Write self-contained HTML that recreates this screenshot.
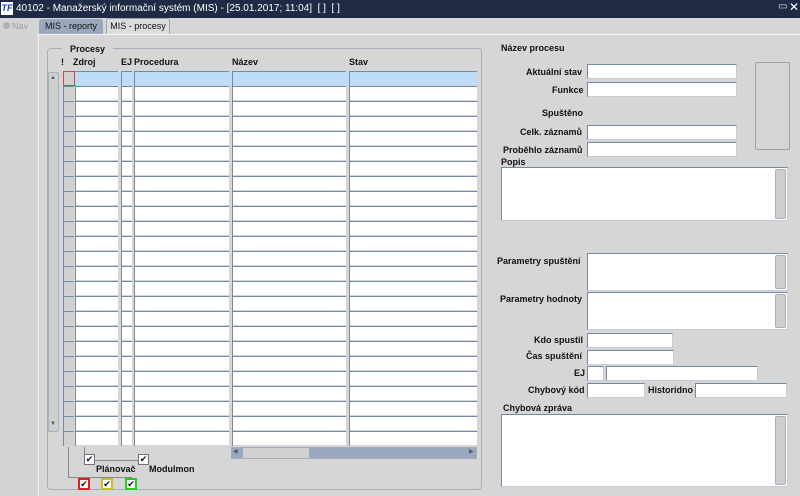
<!DOCTYPE html>
<html><head><meta charset="utf-8"><style>
*{margin:0;padding:0;box-sizing:border-box}
body{width:800px;height:496px;overflow:hidden;background:#d6d6d6;font-family:"Liberation Sans",sans-serif;font-size:9px;color:#111;position:relative}
.a{position:absolute}
.t{position:absolute;font-weight:bold;font-size:9px;white-space:nowrap}
.col{position:absolute;top:71px;height:375px;border-left:1px solid #7788a4;background:repeating-linear-gradient(to bottom,#7788a4 0,#7788a4 1px,#fff 1px,#fff 14px,#d6d6d6 14px,#d6d6d6 15px)}
.gcol{background:repeating-linear-gradient(to bottom,#7788a4 0,#7788a4 1px,#d0d0d0 1px,#d0d0d0 14px,#d6d6d6 14px,#d6d6d6 15px)}
.in{position:absolute;background:#fff;border:1px solid #c8ccd4;border-top:1px solid #7788a4;border-left:1px solid #7788a4;height:15px}
.sb{position:absolute;width:11px;background:#cfcfcf;border:1px solid #a8b0bc;border-radius:2px}
.cb{position:absolute;width:11px;height:11px;background:#fff;border:1px solid #6a7384;font-size:9px;line-height:9px;text-align:center;color:#111}
</style></head><body>
<div class="a" style="left:0;top:0;width:800px;height:18px;background:#1f2b45"></div>
<div class="a" style="left:1px;top:2px;width:12px;height:13px;background:#fff;color:#1a3ac8;font-weight:bold;font-style:italic;font-size:9px;line-height:13px;text-align:center">TF</div>
<div class="a" style="left:16px;top:2px;color:#fff;font-size:10px;line-height:14px">40102 - Manažerský informační systém (MIS) - [25.01.2017; 11:04]&nbsp; [ ]&nbsp; [ ]</div>
<div class="a" style="left:778px;top:1px;color:#dfe4ee;font-size:10px">▭</div>
<div class="a" style="left:789px;top:0px;color:#fff;font-size:12px">✕</div>
<div class="a" style="left:0;top:18px;width:36px;height:478px;background:#d4d4d4"></div>
<div class="a" style="left:3px;top:22px;width:7px;height:7px;border-radius:50%;background:#b0b0b0"></div>
<div class="a" style="left:12px;top:21px;color:#a0a0a0;font-size:9px">Nav</div>
<div class="a" style="left:37px;top:18px;width:763px;height:16px;background:#d6d6d6"></div>
<div class="a" style="left:39px;top:19px;width:64px;height:16px;background:#9ba8bc;border-radius:3px 3px 0 0;font-size:9px;line-height:15px;text-align:center">MIS - reporty</div>
<div class="a" style="left:106px;top:18px;width:64px;height:17px;background:#dcdcdc;border:1px solid #9aa;border-bottom:none;border-radius:3px 3px 0 0;font-size:9px;line-height:15px;text-align:center">MIS - procesy</div>
<div class="a" style="left:37px;top:34px;width:763px;height:1px;background:#f4f4f4"></div>
<div class="a" style="left:38px;top:35px;width:1px;height:461px;background:#f0f0f0"></div>
<div class="a" style="left:47px;top:48px;width:435px;height:442px;border:1px solid #a6aebb;border-radius:4px"></div>
<div class="t" style="left:62px;top:44px;background:#d6d6d6;padding:0 8px">Procesy</div>
<div class="t" style="left:61px;top:57px">!</div>
<div class="t" style="left:73px;top:57px">Zdroj</div>
<div class="t" style="left:121px;top:57px">EJ</div>
<div class="t" style="left:134px;top:57px">Procedura</div>
<div class="t" style="left:232px;top:57px">Název</div>
<div class="t" style="left:349px;top:57px">Stav</div>
<div class="sb" style="left:48px;top:72px;height:360px"></div>
<div class="a" style="left:50px;top:75px;font-size:6px;color:#555">▲</div>
<div class="a" style="left:50px;top:421px;font-size:6px;color:#555">▼</div>
<div class="col gcol" style="left:63px;width:11px"></div>
<div class="col" style="left:75px;width:43px"></div>
<div class="col" style="left:121px;width:11px"></div>
<div class="col" style="left:134px;width:95px"></div>
<div class="col" style="left:232px;width:114px"></div>
<div class="col" style="left:349px;width:128px"></div>
<div class="a" style="left:75px;top:72px;width:402px;height:13px;background:#bcdcf8"></div>
<div class="a" style="left:121px;top:71px;width:1px;height:15px;background:#7788a4"></div>
<div class="a" style="left:134px;top:71px;width:1px;height:15px;background:#7788a4"></div>
<div class="a" style="left:232px;top:71px;width:1px;height:15px;background:#7788a4"></div>
<div class="a" style="left:349px;top:71px;width:1px;height:15px;background:#7788a4"></div>
<div class="a" style="left:63px;top:71px;width:12px;height:15px;border:1px solid #d04848;background:#d0d0d0"></div>
<div class="a" style="left:231px;top:447px;width:246px;height:12px;background:#98a8c0;border:1px solid #aab"></div>
<div class="a" style="left:243px;top:448px;width:66px;height:10px;background:#d0d0d0"></div>
<div class="a" style="left:233px;top:448px;font-size:6px;color:#555">◀</div>
<div class="a" style="left:469px;top:448px;font-size:6px;color:#555">▶</div>
<div class="a" style="left:68px;top:447px;width:1px;height:30px;background:#888"></div>
<div class="a" style="left:68px;top:477px;width:64px;height:1px;background:#888"></div>
<div class="a" style="left:84px;top:447px;width:1px;height:13px;background:#888"></div>
<div class="a" style="left:88px;top:460px;width:52px;height:1px;background:#888"></div>
<div class="cb" style="left:84px;top:454px">✔</div>
<div class="cb" style="left:138px;top:454px">✔</div>
<div class="t" style="left:96px;top:464px">Plánovač</div>
<div class="t" style="left:149px;top:464px">Modulmon</div>
<div class="cb" style="left:78px;top:478px;border:2px solid #e02020;width:12px;height:12px">✔</div>
<div class="cb" style="left:101px;top:478px;border:2px solid #c8c020;width:12px;height:12px">✔</div>
<div class="cb" style="left:125px;top:478px;border:2px solid #20d020;width:12px;height:12px">✔</div>

<div class="t" style="left:501px;top:43px">Název procesu</div>
<div class="t" style="left:526px;top:67px">Aktuální stav</div>
<div class="in" style="left:587px;top:64px;width:150px"></div>
<div class="t" style="left:552px;top:85px">Funkce</div>
<div class="in" style="left:587px;top:82px;width:150px"></div>
<div class="t" style="left:542px;top:108px">Spuštěno</div>
<div class="t" style="left:520px;top:127px">Celk. záznamů</div>
<div class="in" style="left:587px;top:125px;width:150px"></div>
<div class="t" style="left:503px;top:145px">Proběhlo záznamů</div>
<div class="in" style="left:587px;top:142px;width:150px"></div>
<div class="a" style="left:755px;top:62px;width:35px;height:88px;border:1px solid #9aa2b0;border-radius:2px"></div>
<div class="t" style="left:501px;top:157px">Popis</div>
<div class="in" style="left:501px;top:167px;width:287px;height:54px"></div>
<div class="sb" style="left:775px;top:169px;height:50px"></div>
<div class="t" style="left:497px;top:256px">Parametry spuštění</div>
<div class="in" style="left:587px;top:253px;width:201px;height:38px"></div>
<div class="sb" style="left:775px;top:255px;height:34px"></div>
<div class="t" style="left:500px;top:294px">Parametry hodnoty</div>
<div class="in" style="left:587px;top:292px;width:201px;height:38px"></div>
<div class="sb" style="left:775px;top:294px;height:34px"></div>
<div class="t" style="left:534px;top:335px">Kdo spustil</div>
<div class="in" style="left:587px;top:333px;width:86px"></div>
<div class="t" style="left:526px;top:351px">Čas spuštění</div>
<div class="in" style="left:587px;top:350px;width:87px"></div>
<div class="t" style="left:574px;top:368px">EJ</div>
<div class="in" style="left:587px;top:366px;width:17px"></div>
<div class="in" style="left:606px;top:366px;width:152px"></div>
<div class="t" style="left:528px;top:385px">Chybový kód</div>
<div class="in" style="left:587px;top:383px;width:58px"></div>
<div class="t" style="left:648px;top:385px">Historidno</div>
<div class="in" style="left:695px;top:383px;width:92px"></div>
<div class="t" style="left:503px;top:403px">Chybová zpráva</div>
<div class="in" style="left:501px;top:414px;width:287px;height:73px"></div>
<div class="sb" style="left:775px;top:416px;height:69px"></div>
</body></html>
